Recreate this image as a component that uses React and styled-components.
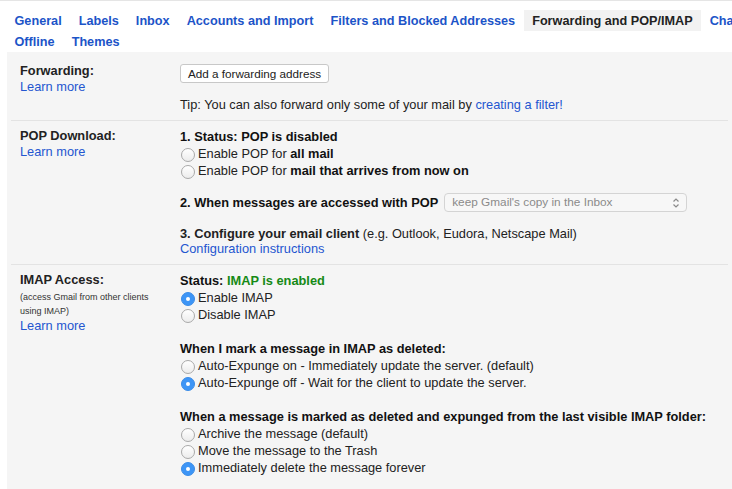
import React from 'react';
import styled, { createGlobalStyle } from 'styled-components';

const tabs = [
  'General',
  'Labels',
  'Inbox',
  'Accounts and Import',
  'Filters and Blocked Addresses',
  'Forwarding and POP/IMAP',
  'Chat',
  'Offline',
  'Themes',
];

function Radio({ checked, children }) {
  return (
    <RadioRow>
      <RadioDot checked={checked} />
      <span>{children}</span>
    </RadioRow>
  );
}

function App() {
  return (
    <Page>
      <GlobalStyle />
      <TabBar>
        {tabs.map((t) => (
          <Tab key={t} active={t === 'Forwarding and POP/IMAP'}>
            {t}
          </Tab>
        ))}
      </TabBar>

      <Panel>
        <Section>
          <LabelCol>
            <SectionTitle>Forwarding:</SectionTitle>
            <Link>Learn more</Link>
          </LabelCol>
          <ContentCol>
            <Button>Add a forwarding address</Button>
            <Tip>
              Tip: You can also forward only some of your mail by <Link>creating a filter!</Link>
            </Tip>
          </ContentCol>
        </Section>

        <Section>
          <LabelCol>
            <SectionTitle>POP Download:</SectionTitle>
            <Link>Learn more</Link>
          </LabelCol>
          <ContentCol>
            <Heading>1. Status: POP is disabled</Heading>
            <Radio>
              Enable POP for <b>all mail</b>
            </Radio>
            <Radio>
              Enable POP for <b>mail that arrives from now on</b>
            </Radio>
            <SelectRow>
              <Heading>2. When messages are accessed with POP</Heading>
              <Select>
                <span>keep Gmail's copy in the Inbox</span>
                <svg width="8" height="12" viewBox="0 0 8 12">
                  <path d="M1.5 4.5 L4 2 L6.5 4.5 M1.5 7.5 L4 10 L6.5 7.5" fill="none" stroke="#8a8a8a" strokeWidth="1.2" />
                </svg>
              </Select>
            </SelectRow>
            <Block>
              <div>
                <b>3. Configure your email client</b> (e.g. Outlook, Eudora, Netscape Mail)
              </div>
              <Link>Configuration instructions</Link>
            </Block>
          </ContentCol>
        </Section>

        <Section last>
          <LabelCol>
            <SectionTitle>IMAP Access:</SectionTitle>
            <Note>(access Gmail from other clients using IMAP)</Note>
            <Link>Learn more</Link>
          </LabelCol>
          <ContentCol>
            <Heading>
              Status: <Green>IMAP is enabled</Green>
            </Heading>
            <Radio checked>Enable IMAP</Radio>
            <Radio>Disable IMAP</Radio>

            <Group>
              <Heading>When I mark a message in IMAP as deleted:</Heading>
              <Radio>Auto-Expunge on - Immediately update the server. (default)</Radio>
              <Radio checked>Auto-Expunge off - Wait for the client to update the server.</Radio>
            </Group>

            <Group>
              <Heading>When a message is marked as deleted and expunged from the last visible IMAP folder:</Heading>
              <Radio>Archive the message (default)</Radio>
              <Radio>Move the message to the Trash</Radio>
              <Radio checked>Immediately delete the message forever</Radio>
            </Group>
          </ContentCol>
        </Section>
      </Panel>
    </Page>
  );
}

export default App;

const GlobalStyle = createGlobalStyle`
  html, body {
    margin: 0;
    background: #fff;
    overflow: hidden;
  }
  body {
    font-family: Arial, "Liberation Sans", sans-serif;
    font-size: 12.8px;
    color: #222;
  }
`;

const Page = styled.div`
  border-top: 1px solid #e5e5e5;
  height: 488px;
  display: flex;
  flex-direction: column;
`;

const TabBar = styled.div`
  display: flex;
  flex-wrap: wrap;
  width: 780px;
  padding: 9px 0 0 6px;
`;

const Tab = styled.div`
  height: 21px;
  line-height: 23px;
  padding: 0 8.5px;
  font-weight: bold;
  font-size: 12.68px;
  color: ${(p) => (p.active ? '#222' : '#1c54c8')};
  background: ${(p) => (p.active ? '#f2f2f2' : 'transparent')};
  white-space: nowrap;
`;

const Panel = styled.div`
  flex: 1;
  margin-left: 7px;
  background: #f5f5f5;
  padding-top: 4px;
`;

const Section = styled.div`
  display: grid;
  grid-template-columns: 160px 1fr;
  margin: 0 4px;
  padding: 7px 9px 7px 9px;
  border-bottom: ${(p) => (p.last ? 'none' : '1px solid #e3e3e3')};
`;

const LabelCol = styled.div`
  display: flex;
  flex-direction: column;
  align-items: flex-start;
  line-height: 16px;
`;

const SectionTitle = styled.div`
  font-weight: bold;
  color: #222;
`;

const Note = styled.div`
  font-size: 9px;
  line-height: 14px;
  color: #333;
  margin-top: 2px;
  width: 140px;
`;

const Link = styled.span`
  color: #2456d0;
  cursor: pointer;
`;

const ContentCol = styled.div`
  display: flex;
  flex-direction: column;
  align-items: flex-start;
  line-height: 17px;
`;

const Button = styled.button`
  margin-top: 1px;
  height: 19px;
  padding: 0 7px;
  font-family: Arial, "Liberation Sans", sans-serif;
  font-size: 11.7px;
  color: #222;
  background: #fff;
  border: 1px solid #c8c8c8;
  border-radius: 3px;
`;

const Tip = styled.div`
  margin-top: 13px;
`;

const Heading = styled.div`
  font-weight: bold;
  color: #111;
`;

const Green = styled.span`
  color: #168a16;
`;

const RadioRow = styled.div`
  display: flex;
  align-items: center;
  height: 17px;
  color: #222;
  b {
    color: #111;
  }
`;

const RadioDot = styled.span`
  box-sizing: border-box;
  width: 14px;
  height: 14px;
  margin: 2px 3px 0 1px;
  border-radius: 50%;
  flex-shrink: 0;
  position: relative;
  border: 1px solid ${(p) => (p.checked ? '#3a8ce8' : '#a9a9a9')};
  background: ${(p) => (p.checked ? '#3d95f6' : 'linear-gradient(#fff, #ececec)')};

  &::after {
    content: '';
    display: ${(p) => (p.checked ? 'block' : 'none')};
    position: absolute;
    left: 4px;
    top: 4px;
    width: 4px;
    height: 4px;
    border-radius: 50%;
    background: #fff;
  }
`;

const SelectRow = styled.div`
  display: flex;
  align-items: center;
  height: 19px;
  margin-top: 14px;
`;

const Select = styled.div`
  box-sizing: border-box;
  display: flex;
  align-items: center;
  justify-content: space-between;
  width: 243px;
  height: 19px;
  margin-left: 6px;
  padding: 0 6px 0 7px;
  font-size: 11.8px;
  color: #8a8a8a;
  background: #f7f7f7;
  border: 1px solid #d4d4d4;
  border-radius: 4px;
`;

const Block = styled.div`
  margin-top: 14px;
  line-height: 15px;
  padding-bottom: 1px;
`;

const Group = styled.div`
  margin-top: 17px;
  display: flex;
  flex-direction: column;
  align-items: flex-start;
`;
